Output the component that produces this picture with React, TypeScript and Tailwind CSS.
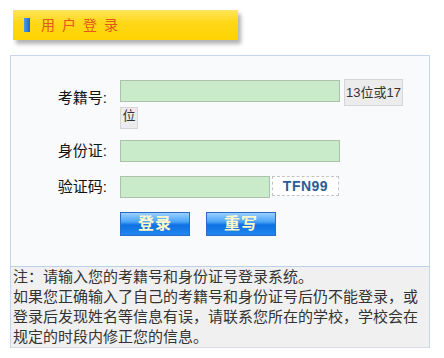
import React from "react";

const cjk = { fontFamily: '"Liberation Sans", "Noto Sans CJK SC", sans-serif' };

function Btn({ children }: { children: React.ReactNode }) {
  return (
    <button
      type="button"
      className="w-[70px] h-[24px] border border-[#2a6cc8] bg-[linear-gradient(180deg,#9ad0ff_0%,#4aa4f7_40%,#0c70e2_55%,#2288f0_100%)] text-[16px] leading-[22px] font-bold text-[#fff8c8] tracking-[1px]"
      style={cjk}
    >
      {children}
    </button>
  );
}

export default function App() {
  return (
    <div className="w-[444px] h-[358px] bg-white overflow-hidden" style={cjk}>
      {/* header */}
      <div className="ml-[13px] mt-[10px] w-[225px] h-[30px] flex items-center bg-[linear-gradient(180deg,#ffe55c_0%,#ffd81a_40%,#ffd200_100%)] shadow-[3px_4px_4px_rgba(0,0,0,0.3)]">
        <div className="ml-[11px] w-[6px] h-[14px] bg-[linear-gradient(90deg,#4a9cf0,#1d66c8)]" />
        <div className="ml-[11px] text-[14px] leading-[16px] tracking-[7px] text-[#e2581a]">用户登录</div>
      </div>

      {/* main box */}
      <div className="ml-[10px] mt-[15px] w-[420px] border-x border-t border-[#c6d6ea]">
        <div className="h-[210px] bg-[#f9fafc] pt-[23px]">
          {/* row 1 */}
          <div className="flex items-start">
            <div className="w-[109px] pr-[13px] text-right text-[15px] leading-[20px] mt-[9px] text-[#111]">考籍号:</div>
            <div className="flex items-start">
              <input className="mt-[1px] w-[220px] h-[22px] border border-[#aac2aa] bg-[#c9ebc9] outline-none" />
              <span className="ml-[4px] h-[27px] px-[1px] border border-[#d6d6d6] bg-[#ececec] text-[13px] leading-[25px] text-[#333]">13位或17</span>
            </div>
          </div>
          <div className="-mt-[5px] ml-[109px]">
            <span className="inline-block w-[18px] h-[22px] border border-[#d6d6d6] bg-[#ececec] text-[13px] leading-[16px] text-[#333] text-center">位</span>
          </div>
          {/* row 2 */}
          <div className="mt-[11px] flex items-center">
            <div className="w-[109px] pr-[13px] text-right text-[15px] leading-[20px] text-[#111]">身份证:</div>
            <input className="w-[220px] h-[22px] border border-[#aac2aa] bg-[#c9ebc9] outline-none" />
          </div>
          {/* row 3 */}
          <div className="mt-[14px] flex items-start">
            <div className="w-[109px] pr-[13px] text-right text-[15px] leading-[20px] text-[#111] mt-[1px]">验证码:</div>
            <input className="w-[150px] h-[22px] border border-[#aac2aa] bg-[#c9ebc9] outline-none" />
            <div className="ml-[2px] w-[67px] h-[20px] border border-dashed border-[#c4c4c4] bg-white flex items-center justify-center text-[14px] font-bold tracking-[0.5px] text-[#2b5c98]">
              TFN99
            </div>
          </div>
          {/* buttons */}
          <div className="mt-[14px] ml-[109px] flex gap-[16px]">
            <Btn>登录</Btn>
            <Btn>重写</Btn>
          </div>
        </div>
        {/* notes */}
        <div className="border-t border-b border-t-[#bcd0ea] border-b-[#d8dde4] bg-[#f0f0f0] h-[82px] pl-[2px] text-[15px] leading-[20px] text-[#333] whitespace-nowrap">
          <div>注：请输入您的考籍号和身份证号登录系统。</div>
          <div>如果您正确输入了自己的考籍号和身份证号后仍不能登录，或</div>
          <div>登录后发现姓名等信息有误，请联系您所在的学校，学校会在</div>
          <div>规定的时段内修正您的信息。</div>
        </div>
      </div>
    </div>
  );
}
